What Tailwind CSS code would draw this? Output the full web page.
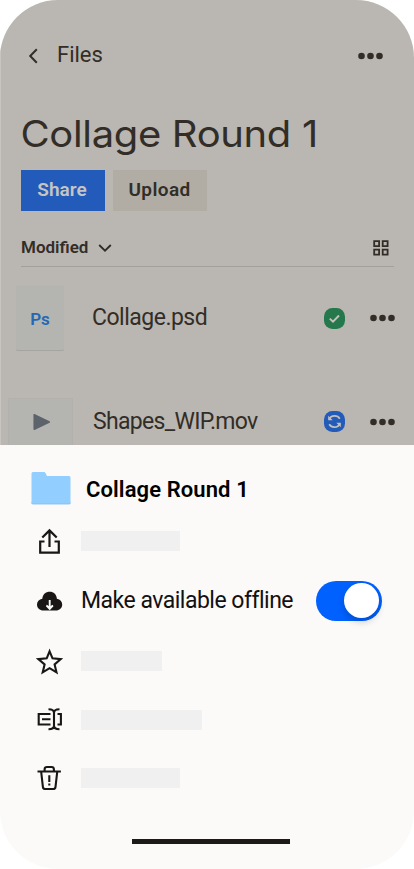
<!DOCTYPE html>
<html lang="en">
<head>
<meta charset="utf-8">
<meta name="viewport" content="width=device-width, initial-scale=1">
<title>Files</title>
<script src="https://cdn.jsdelivr.net/npm/@tailwindcss/browser@4"></script>
</head>
<body class="bg-white">
<main class="flex h-[869px] w-[414px] flex-col overflow-hidden rounded-[58px] bg-[#fbfaf8] font-['Roboto','Liberation_Sans',sans-serif] text-[#322d27]">
  <section class="h-[445px] shrink-0 overflow-hidden border-l border-[#c8c5c1] bg-[#bab6b1]">
    <header class="flex h-[111px] items-center pr-[31px] pl-[27px]">
      <svg class="h-4 w-[10px]" viewBox="0 0 10 16" fill="none" stroke="#322d27" stroke-width="2"><path d="M8.800 1.300 2.200 8l6.600 6.700"/></svg>
      <span class="ml-[19px] pb-[2px] text-[22px] leading-7">Files</span>
      <svg class="ml-auto h-[8px] w-[25px]" viewBox="0 0 25 8" fill="#322d27"><circle cx="3.500" cy="4" r="3.300"/><circle cx="12.500" cy="4" r="3.300"/><circle cx="21.500" cy="4" r="3.300"/></svg>
    </header>
    <h1 class="h-[59px] w-fit origin-left scale-x-[1.080] pl-[18px] font-['Inter','Liberation_Sans',sans-serif] text-[37px] leading-[46px] font-normal tracking-[-0.3px] whitespace-nowrap">Collage Round 1</h1>
    <div class="flex h-[41px] gap-2 pl-5 text-[19px] font-semibold">
      <div class="flex w-[84px] items-center justify-center bg-[#225bb9] pr-[2px] text-[#c4c5c5]">Share</div>
      <div class="flex w-[94px] items-center justify-center bg-[#b1ada5] pr-[1px] tracking-[0.4px]">Upload</div>
    </div>
    <div class="mr-5 ml-5 flex h-[56px] items-center border-b border-[#a39f9a] pt-[18px]">
      <span class="text-[17px] font-semibold">Modified</span>
      <svg class="ml-[10px] h-2 w-[14px]" viewBox="0 0 14 8" fill="none" stroke="#322d27" stroke-width="1.900"><path d="m1.200 1 5.800 5.600L12.800 1"/></svg>
      <svg class="mr-[5px] ml-auto h-4 w-4" viewBox="0 0 16 16" fill="none" stroke="#322d27" stroke-width="1.800"><path d="M1.200 1.200h4.900v4.900H1.200zM9.700 1.200h4.900v4.900H9.700zM1.200 9.700h4.900v4.900H1.200zM9.700 9.700h4.900v4.900H9.700z"/></svg>
    </div>
    <div class="flex h-[103px] items-center pr-[18px] pl-[15px]">
      <div class="flex h-[65px] w-[48px] items-center justify-center rounded-[2px] border-b border-[#a5a4a0] bg-[#b4b4b1] pt-[3px] text-[17px] font-semibold text-[#2368b5]">Ps</div>
      <span class="ml-[28px] pb-[2px] text-[23px] leading-7 tracking-[-0.5px]">Collage.psd</span>
      <svg class="ml-auto h-[21px] w-[21px]" viewBox="0 0 21 21"><rect width="21" height="21" rx="8.500" fill="#25784b"/><path d="m5.800 10.600 3.200 3.100 6-6.200" fill="none" stroke="#c5c3bd" stroke-width="1.900"/></svg>
      <svg class="mr-[1px] mb-[1px] ml-[25px] h-[8px] w-[25px]" viewBox="0 0 25 8" fill="#322d27"><circle cx="3.500" cy="4" r="3.300"/><circle cx="12.500" cy="4" r="3.300"/><circle cx="21.500" cy="4" r="3.300"/></svg>
    </div>
    <div class="flex h-[103px] items-center pr-[18px] pl-[7px]">
      <div class="mt-2 flex h-[55px] w-[65px] items-center justify-center border border-[#b2b1ad] bg-[#b4b4b1] pb-2">
        <svg class="ml-[2px] h-[18px] w-[18px]" viewBox="0 0 18 18"><path d="M1.200 1.700v14.600L16.300 9Z" fill="#5c636b" stroke="#5c636b" stroke-width="1.500" stroke-linejoin="round"/></svg>
      </div>
      <span class="ml-[20px] text-[23px] leading-7 tracking-[-0.680px]">Shapes_WIP.mov</span>
      <svg class="ml-auto h-[21px] w-[21px]" viewBox="0 0 21 21"><rect width="21" height="21" rx="8.500" fill="#225bb9"/><g fill="none" stroke="#c0c0c1" stroke-width="1.700"><path d="M5.200 8.500c.8-2.700 3-3.700 5.500-3.700 2 0 3.900.9 5.100 2.900M15.800 12.500c-.8 2.700-3 3.700-5.500 3.700-2 0-3.900-.9-5.100-2.900"/></g><path d="M4.200 4.800v4.500h4.500zM16.800 16.200v-4.500h-4.500z" fill="#c0c0c1"/></svg>
      <svg class="mr-[1px] ml-[25px] h-[8px] w-[25px]" viewBox="0 0 25 8" fill="#322d27"><circle cx="3.500" cy="4" r="3.300"/><circle cx="12.500" cy="4" r="3.300"/><circle cx="21.500" cy="4" r="3.300"/></svg>
    </div>
  </section>
  <section class="flex grow flex-col pl-[31px] text-[#111]">
    <div class="flex h-[68px] items-center pt-[18px]">
      <svg class="h-[34px] w-10" viewBox="0 0 40 34"><path d="M2 1h11q1 0 1.500 1l1.500 3h22q1.500 0 1.500 1.500V31.500Q39.500 33 38 33H2Q.5 33 .5 31.500v-29Q.5 1 2 1Z" fill="#92ceff"/><path d="M.5 31.500Q.5 33 2 33h36q1.500 0 1.500-1.500" fill="none" stroke="#82bdf0" stroke-width=".8"/></svg>
      <h2 class="ml-[15px] pt-[2px] text-[22px] font-semibold tracking-[0.1px] text-black">Collage Round 1</h2>
    </div>
    <div class="flex h-[56px] items-center">
      <svg class="ml-[5px] h-[27px] w-[27px]" viewBox="0 0 27 27" fill="none" stroke="#191615" stroke-width="2.200"><path d="M8.500 13.500H4.200v11.200h18.600V13.500h-4.300M13.500 19V2.500M6.300 9.500l7.200-7.100 7.200 7.100"/></svg>
      <div class="ml-[18px] h-5 w-[99px] bg-[#f0f0f0]"></div>
    </div>
    <div class="flex h-[63px] items-center">
      <svg class="ml-[5px] h-[27px] w-[27px]" viewBox="0 0 27 27"><path d="M7.500 23.500C3.700 23.500 1 21 1 17.500c0-3 2-5.100 5.300-5.800C6.800 7.300 9.700 4.800 13.700 4.800s6.700 2.500 7.200 6.900c3.300.7 5.300 2.800 5.300 5.800 0 3.500-2.700 6-6.500 6Z" fill="#191615"/><path d="M13.700 13v7" stroke="#fbfaf8" stroke-width="1.900"/><path d="M10.800 17.800 13.700 19.500 16.600 17.800 17.500 19.300 13.700 23.300 9.900 19.300Z" fill="#fbfaf8"/></svg>
      <span class="ml-[18px] pt-[1px] text-[23px] tracking-[-0.500px] whitespace-nowrap">Make available offline</span>
      <div class="mr-8 ml-auto flex h-10 w-[66px] items-center justify-end rounded-full bg-[#0061fe] pr-[3px]">
        <div class="mb-[1px] h-[35px] w-[35px] rounded-full bg-white shadow-[0_4px_7px_rgba(0,0,0,0.18)]"></div>
      </div>
    </div>
    <div class="flex h-[58px] items-center">
      <svg class="ml-[5px] h-[27px] w-[27px]" viewBox="0 0 27 27" fill="none" stroke="#191615" stroke-width="2.100"><path d="m13.600 3.300 2.900 7 8.300.8-6.200 5.300 1.900 8-6.900-4.200-6.900 4.200 1.900-8-6.200-5.300 8.300-.8Z"/></svg>
      <div class="ml-[18px] h-5 w-[81px] bg-[#f0f0f0]"></div>
    </div>
    <div class="flex h-[59px] items-center">
      <svg class="ml-[5px] h-[27px] w-[27px]" viewBox="0 0 27 27" fill="none" stroke="#191615" stroke-width="2.100"><path d="M14.500 8H2.700v10.500h11.800M6 13.200h8.500M21.500 8h3.400v10.500h-3.400M12.500 3.200c3.700 0 5.500.8 5.500 3.500v13c0 2.700-1.800 3.500-5.500 3.500M23.500 3.200c-3.700 0-5.500.8-5.500 3.500M18 19.700c0 2.700 1.800 3.500 5.500 3.500"/></svg>
      <div class="ml-[18px] h-5 w-[121px] bg-[#f0f0f0]"></div>
    </div>
    <div class="flex h-[57px] items-center">
      <svg class="ml-[5px] h-[27px] w-[27px]" viewBox="0 0 27 27" fill="none" stroke="#191615" stroke-width="2.100"><path d="M1.500 7.500h23.400M8.600 7V5.400Q8.600 3 11 3h4.500q2.400 0 2.400 2.400V7M5.200 8l1.700 14.800q.2 2.200 2.400 2.200h7.800q2.200 0 2.400-2.200L21.200 8M13.300 11.300v6.700M13.300 19.500v2"/></svg>
      <div class="ml-[18px] h-5 w-[99px] bg-[#f0f0f0]"></div>
    </div>
    <div class="mt-[33px] ml-[101px] h-[5px] w-[158px] bg-[#1e1919]"></div>
  </section>
</main>
</body>
</html>
